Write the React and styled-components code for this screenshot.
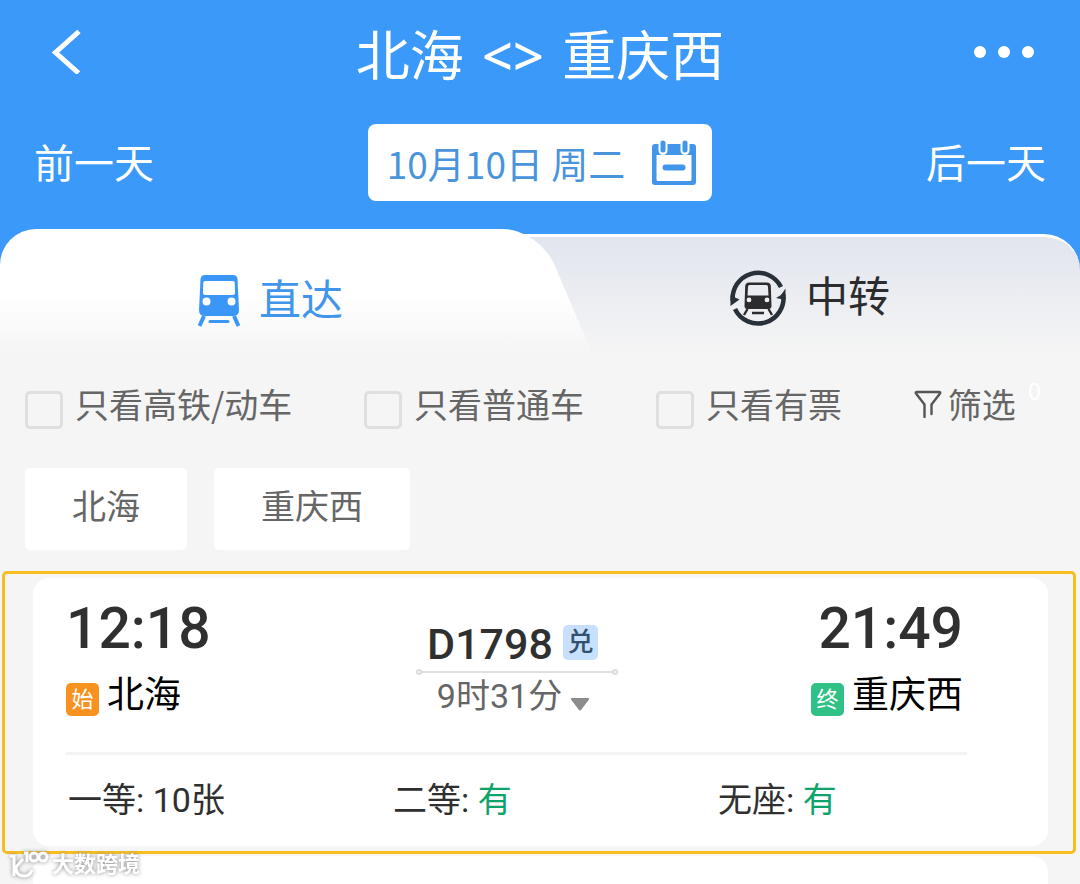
import React, { useState } from 'react'
import styled, { createGlobalStyle } from 'styled-components'

const filterOptions = [
  { id: 'fast', label: '只看高铁/动车' },
  { id: 'normal', label: '只看普通车' },
  { id: 'available', label: '只看有票' },
]

const seats = [
  { name: '一等', left: '10张', plenty: false },
  { name: '二等', left: '有', plenty: true },
  { name: '无座', left: '有', plenty: true },
]

const TrainIcon = () => (
  <svg width='44' height='52' viewBox='0 0 44 52' aria-hidden='true'>
    <path
      fill='#3b97f7'
      fillRule='evenodd'
      d='M8 0h28q4 0 4.500 4L42 35q0 6-6 6H8q-6 0-6-6L3.500 4Q4 0 8 0ZM8 6Q6.500 6 6.300 7.500L6 18q0 2 2 2h28q2 0 2-2L37.700 7.500q-.2-1.500-1.700-1.500ZM9.500 22.500a4 4 0 1 0 0 8 4 4 0 0 0 0-8ZM34.500 22.500a4 4 0 1 0 0 8 4 4 0 0 0 0-8Z'
    />
    <path
      d='M7 41L2.500 51M37 41L41.500 51'
      stroke='#3b97f7'
      strokeWidth='4'
      fill='none'
    />
    <path
      d='M13 46.500h18'
      stroke='#3b97f7'
      strokeWidth='3'
      strokeLinecap='round'
    />
  </svg>
)

const TransferIcon = () => (
  <svg width='56' height='56' viewBox='0 0 56 56' aria-hidden='true'>
    <g fill='none' stroke='#28303a' strokeWidth='4.500'>
      <path d='M2.800 31A25.500 25.500 0 0 1 51 17' />
      <path d='M53.200 24A25.500 25.500 0 0 1 5 39' />
    </g>
    <path fill='#28303a' d='M.5 25L.5 36 9.500 29.500 4 27ZM55.500 18.500L55.500 30 46 28 51 25Z' />
    <path
      fill='#2c2c2e'
      fillRule='evenodd'
      d='M19 12.500h18q3.500 0 3.800 3.500L41.500 36q0 3-3 3h-21q-3 0-3-3L15.200 16q.3-3.500 3.800-3.500ZM19.500 15q-1.500 0-1.500 2L17.500 25.500h21l-.5-8.500q0-2-1.500-2ZM19 27.500a2.400 2.400 0 1 0 0 4.800A2.400 2.400 0 0 0 19 27.500ZM37 27.500a2.400 2.400 0 1 0 0 4.800A2.400 2.400 0 0 0 37 27.500Z'
    />
    <path
      d='M17.500 39L14 45M38.500 39L42 45M22 43h12'
      stroke='#2c2c2e'
      strokeWidth='2.400'
      fill='none'
    />
  </svg>
)

const CalendarIcon = () => (
  <svg width='44' height='46' viewBox='0 0 44 46' aria-hidden='true'>
    <path
      fill='#4196ea'
      fillRule='evenodd'
      d='M3 4h38q3 0 3 3v35q0 3-3 3H3q-3 0-3-3V7q0-3 3-3ZM4.500 15v24.500q0 1.500 1.500 1.500h32Q39.500 41 39.500 39.500V15Z'
    />
    <g strokeLinecap='round'>
      <path d='M11 2.500v8M33 2.500v8' stroke='#fff' strokeWidth='9' />
      <path d='M11 3v7M33 3v7' stroke='#4196ea' strokeWidth='5' />
      <path d='M13.500 27.500h17' stroke='#4196ea' strokeWidth='6' />
    </g>
  </svg>
)

const FunnelIcon = () => (
  <svg width='28' height='28' viewBox='0 0 28 28' aria-hidden='true'>
    <path
      d='M10.500 27V14.500L2 3.500Q1.200 2 3 2h22q1.800 0 1 1.500l-8.500 11V24'
      fill='none'
      stroke='#555'
      strokeWidth='2.400'
      strokeLinecap='round'
      strokeLinejoin='round'
    />
  </svg>
)

const App = () => {
  const [tab, setTab] = useState('direct')
  const [checked, setChecked] = useState({})

  const toggle = (e) => {
    setChecked({ ...checked, [e.target.name]: e.target.checked })
  }

  return (
    <Page>
      <GlobalStyle />
      <Header>
        <TitleRow>
          <IconButton type='button' aria-label='返回'>
            <svg width='40' height='44' viewBox='0 0 40 44'>
              <path
                d='M33 1.500L9.500 22.500 32.500 43'
                fill='none'
                stroke='#fff'
                strokeWidth='5'
              />
            </svg>
          </IconButton>
          <h1>
            北海 <Swap>&lt;&gt;</Swap> 重庆西
          </h1>
          <IconButton type='button' aria-label='更多'>
            <svg width='60' height='12' viewBox='0 0 60 12' fill='#fff'>
              <circle cx='6' cy='6' r='6' />
              <circle cx='30' cy='6' r='6' />
              <circle cx='54' cy='6' r='6' />
            </svg>
          </IconButton>
        </TitleRow>
        <DayRow>
          <DayButton type='button'>前一天</DayButton>
          <DateButton type='button'>
            10月10日 周二
            <CalendarIcon />
          </DateButton>
          <DayButton type='button'>后一天</DayButton>
        </DayRow>
      </Header>

      <Tabs>
        <DirectTab type='button' onClick={() => setTab('direct')} aria-pressed={tab === 'direct'}>
          <TrainIcon />
          <span>直达</span>
        </DirectTab>
        <TransferTab type='button' onClick={() => setTab('transfer')} aria-pressed={tab === 'transfer'}>
          <TransferIcon />
          <span>中转</span>
        </TransferTab>
      </Tabs>

      <Filters>
        {filterOptions.map((f) => {
          return (
            <Check key={f.id} htmlFor={f.id}>
              <input
                type='checkbox'
                id={f.id}
                name={f.id}
                checked={!!checked[f.id]}
                onChange={toggle}
              />
              {f.label}
            </Check>
          )
        })}
        <FilterButton type='button'>
          <FunnelIcon />
          筛选
          <Count>0</Count>
        </FilterButton>
      </Filters>

      <Stations>
        <Chip type='button'>北海</Chip>
        <Chip type='button'>重庆西</Chip>
      </Stations>

      <Highlight>
        <Card>
          <Route>
            <Stop>
              <Time>12:18</Time>
              <Station>
                <Tag $color='#f79221'>始</Tag>
                北海
              </Station>
            </Stop>
            <Train>
              <TrainNo>
                D1798
                <Exchange>兑</Exchange>
              </TrainNo>
              <Line />
              <Duration type='button'>
                9时31分
                <svg width='20' height='13' viewBox='0 0 20 13' aria-hidden='true'>
                  <path d='M2 0h16q2 0 1 1.500L11 12q-1 1-2 0L1 1.500Q0 0 2 0Z' fill='#8c8c8c' />
                </svg>
              </Duration>
            </Train>
            <Stop>
              <Time>21:49</Time>
              <Station>
                <Tag $color='#2fc186'>终</Tag>
                重庆西
              </Station>
            </Stop>
          </Route>
          <Seats>
            {seats.map((s) => {
              return (
                <Seat key={s.name} $plenty={s.plenty}>
                  {s.name}: <b>{s.left}</b>
                </Seat>
              )
            })}
          </Seats>
        </Card>
      </Highlight>
      <NextCard />

      <Watermark>
        <svg width='42' height='30' viewBox='0 0 42 30' aria-hidden='true'>
          <g fill='none' stroke='#fff' strokeWidth='3'>
            <path d='M2 6h4v20M15 9L8 17q0 9 8 9 6 0 8-6' />
            <path d='M16 3h3v9' />
            <circle cx='26' cy='7' r='4' />
            <circle cx='35' cy='7' r='4' />
          </g>
        </svg>
        大数跨境
      </Watermark>
    </Page>
  )
}

const GlobalStyle = createGlobalStyle`
  *,
  *::before,
  *::after {
    box-sizing: border-box;
    margin: 0;
    padding: 0;
  }
  body {
    background: #f5f5f5;
    font-family: Roboto, 'Noto Sans CJK SC', sans-serif;
  }
  button {
    border: none;
    background: transparent;
    font-family: inherit;
    cursor: pointer;
  }
  svg {
    display: block;
    flex-shrink: 0;
  }
`

const Page = styled.main`
  position: relative;
  display: flex;
  flex-direction: column;
  min-height: 100vh;
  overflow: hidden;
`

const Header = styled.header`
  background: #3b99f9;
  color: #fff;
  padding: 16px 34px 28px;
`

const TitleRow = styled.div`
  display: grid;
  grid-template-columns: 1fr auto 1fr;
  align-items: center;
  height: 72px;
  padding: 0 12px;
  h1 {
    padding-top: 3px;
    font-size: 54px;
    font-weight: 400;
    line-height: 72px;
    white-space: pre;
  }
`

const Swap = styled.span`
  margin: 0 5px;
  font-family: 'Noto Sans', sans-serif;
  font-weight: 500;
`

const IconButton = styled.button`
  justify-self: start;
  margin-bottom: 6px;
  &:last-child {
    justify-self: end;
  }
`

const DayRow = styled.div`
  display: flex;
  justify-content: space-between;
  align-items: center;
  margin-top: 36px;
`

const DayButton = styled.button`
  padding-top: 4px;
  color: #fff;
  font-size: 40px;
  line-height: 48px;
`

const DateButton = styled.button`
  display: flex;
  align-items: center;
  gap: 27px;
  height: 77px;
  padding: 0 16px 0 19px;
  border-radius: 8px;
  background: #fff;
  color: #4a94dc;
  font-family: 'Noto Sans CJK SC', sans-serif;
  font-size: 37px;
`

const Tabs = styled.nav`
  display: grid;
  grid-template-columns: 1fr 1fr;
  height: 126px;
  background: linear-gradient(#3b99f9 50%, #f5f5f5 50%);
`

const Tab = styled.button`
  position: relative;
  display: flex;
  justify-content: center;
  align-items: center;
  gap: 20px;
  font-size: 42px;
  line-height: 50px;
`

/* the right end is painted by the slanted ::after */
const DirectTab = styled(Tab)`
  z-index: 1;
  padding-top: 17px;
  gap: 18px;
  color: #4196ea;
  border-radius: 36px 0 0 0;
  background: linear-gradient(#fff 50%, #f5f5f5) 0 0 / calc(100% - 50px) 100% no-repeat;
  &::after {
    content: '';
    position: absolute;
    z-index: -1;
    top: 0;
    right: -26px;
    width: 120px;
    height: 100%;
    border-radius: 0 36px 0 0;
    background: linear-gradient(#fff 50%, #f5f5f5);
    transform: skewX(23deg);
  }
`

const TransferTab = styled(Tab)`
  margin: 5px 0 0 -60px;
  padding-left: 60px;
  padding-top: 4px;
  color: #2c2c2e;
  border-top: 3px solid #fff;
  border-radius: 0 36px 0 0;
  background: linear-gradient(#e1e5ee, #f5f5f5);
`

const Filters = styled.form`
  display: flex;
  justify-content: space-between;
  align-items: flex-end;
  padding: 24px 39px 0 25px;
  font-family: 'Noto Sans CJK SC', sans-serif;
`

const Check = styled.label`
  display: flex;
  align-items: flex-end;
  gap: 12px;
  color: #666;
  font-size: 34px;
  line-height: 50px;
  white-space: nowrap;
  input {
    appearance: none;
    width: 38px;
    height: 38px;
    border: 3px solid #dfdfdf;
    border-radius: 5px;
  }
  input:checked {
    background: #3b99f9;
  }
`

const FilterButton = styled.button`
  display: flex;
  align-items: center;
  gap: 6px;
  color: #666;
  font-size: 34px;
  line-height: 50px;
`

const Count = styled.span`
  align-self: flex-start;
  margin-left: 6px;
  color: #fff;
  font-size: 24px;
  line-height: 22px;
`

const Stations = styled.div`
  display: flex;
  gap: 27px;
  padding: 39px 25px 21px;
`

const Chip = styled.button`
  padding: 16px 47px 20px;
  border-radius: 5px;
  background: #fff;
  color: #666;
  font-size: 34px;
  line-height: 46px;
`

const Highlight = styled.section`
  margin: 0 4px 0 2px;
  padding: 4px 25px 5px 28px;
  border: 3px solid #f8be1f;
  border-radius: 5px;
`

const Card = styled.article`
  border-radius: 16px;
  background: #fff;
`

const NextCard = styled.article`
  flex: 1;
  margin: 2px 32px 0 33px;
  border-radius: 16px 16px 0 0;
  background: #fff;
`

const Route = styled.div`
  display: grid;
  grid-template-columns: 1fr 202px 1fr;
  margin: 0 81px 0 33px;
  padding: 21px 0 35px;
  border-bottom: 3px solid #f3f3f3;
`

const Stop = styled.div`
  display: flex;
  flex-direction: column;
  gap: 17px;
  &:last-child {
    align-items: flex-end;
    padding-right: 4px;
  }
`

const Time = styled.time`
  color: #303030;
  font-size: 57px;
  font-weight: 500;
  line-height: 60px;
`

const Station = styled.div`
  display: flex;
  align-items: flex-end;
  gap: 8px;
  color: #000;
  font-size: 37px;
  line-height: 40px;
`

const Tag = styled.span`
  width: 33px;
  height: 33px;
  border-radius: 5px;
  background: ${(props) => props.$color};
  color: #fff;
  font-size: 22px;
  line-height: 34px;
  text-align: center;
`

const Train = styled.div`
  display: flex;
  flex-direction: column;
  align-items: center;
  padding-top: 20px;
`

const TrainNo = styled.h2`
  display: flex;
  align-items: center;
  gap: 10px;
  padding-right: 8px;
  color: #303030;
  font-size: 43px;
  font-weight: 500;
  line-height: 50px;
`

const Exchange = styled.span`
  width: 35px;
  height: 35px;
  margin-bottom: 4px;
  border-radius: 5px;
  background: #c6e0fd;
  color: #33506f;
  font-size: 26px;
  line-height: 35px;
  text-align: center;
`

const Line = styled.div`
  display: flex;
  justify-content: space-between;
  align-items: center;
  width: 100%;
  height: 6px;
  background: linear-gradient(#e0e0e0, #e0e0e0) center / calc(100% - 10px) 2px no-repeat;
  &::before,
  &::after {
    content: '';
    width: 6px;
    height: 6px;
    border: 2px solid #dcdcdc;
    border-radius: 50%;
  }
`

const Duration = styled.button`
  display: flex;
  align-items: center;
  gap: 8px;
  padding-right: 6px;
  color: #666;
  font-size: 34px;
  line-height: 42px;
  svg {
    margin-top: 16px;
  }
`

const Seats = styled.div`
  display: grid;
  grid-template-columns: repeat(3, 1fr);
  padding: 22px 5px 23px 35px;
`

const Seat = styled.p`
  color: #303030;
  font-size: 34px;
  line-height: 46px;
  b {
    color: ${(props) => (props.$plenty ? '#0fa36b' : '#303030')};
    font-weight: 400;
  }
`

const Watermark = styled.div`
  position: absolute;
  left: 8px;
  bottom: 3px;
  display: flex;
  align-items: center;
  gap: 2px;
  color: #fff;
  font-size: 22px;
  font-weight: 700;
  line-height: 32px;
  filter: drop-shadow(0 0 2px #888);
`

export default App
